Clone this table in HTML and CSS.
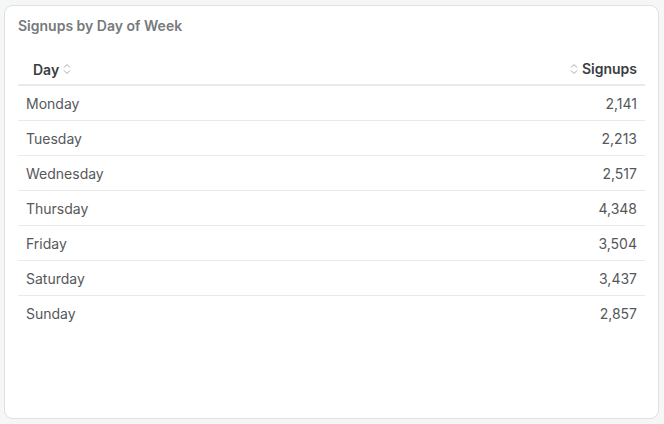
FILE: index.html
```html
<!DOCTYPE html>
<html>
<head>
<meta charset="utf-8">
<link rel="stylesheet" href="styles.css">
</head>
<body>
<div class="card">
  <h2 class="title">Signups by Day of Week</h2>
  <table class="tbl">
    <thead>
      <tr>
        <th class="left"><span class="th-in">Day<svg class="sort" viewBox="0 0 8 12"><path d="M1 4.5 L4 1.5 L7 4.5 M1 7.5 L4 10.5 L7 7.5" fill="none" stroke="currentColor" stroke-width="1"/></svg></span></th>
        <th class="right"><span class="th-in"><svg class="sort" viewBox="0 0 8 12"><path d="M1 4.5 L4 1.5 L7 4.5 M1 7.5 L4 10.5 L7 7.5" fill="none" stroke="currentColor" stroke-width="1"/></svg>Signups</span></th>
      </tr>
    </thead>
    <tbody>
      <tr><td>Monday</td><td class="num">2,141</td></tr>
      <tr><td>Tuesday</td><td class="num">2,213</td></tr>
      <tr><td>Wednesday</td><td class="num">2,517</td></tr>
      <tr><td>Thursday</td><td class="num">4,348</td></tr>
      <tr><td>Friday</td><td class="num">3,504</td></tr>
      <tr><td>Saturday</td><td class="num">3,437</td></tr>
      <tr><td>Sunday</td><td class="num">2,857</td></tr>
    </tbody>
  </table>
</div>
</body>
</html>
```
FILE: styles.css
```css
html, body { margin: 0; padding: 0; }
body {
  background: #f5f6f6;
  font-family: Inter, "Noto Sans", sans-serif;
  width: 664px; height: 424px;
  padding: 5px 5px 5px 4px;
  box-sizing: border-box;
}
.card {
  background: #fff;
  border: 1px solid #dfe1e2;
  border-radius: 9px;
  height: 414px;
  width: 655px;
  box-sizing: border-box;
  padding: 11px 13px 0 13px;
}
.title {
  margin: 0;
  font-size: 14px;
  font-weight: 600;
  color: #77797b;
  line-height: 18px;
}
.tbl {
  width: 100%;
  border-collapse: collapse;
  margin-top: 19px;
  font-size: 14px;
  color: #55585b;
}
.tbl th {
  font-weight: 600;
  color: #3a3d3f;
  height: 30px;
  padding: 0 8px 0 15px;
  border-bottom: 2px solid #e8eaeb;
  vertical-align: middle;
}
.tbl th.left { text-align: left; }
.tbl th.right { text-align: right; padding-right: 8px; }
.th-in { display: inline-flex; align-items: center; gap: 4px; }
.sort { width: 8px; height: 12px; color: #a5a8ab; }
.tbl td {
  height: 34px;
  padding: 0 8px;
  border-bottom: 1px solid #e8eaeb;
  font-weight: 400;
}
.tbl tr:last-child td { border-bottom: none; }
.tbl td.num { text-align: right; }
```
